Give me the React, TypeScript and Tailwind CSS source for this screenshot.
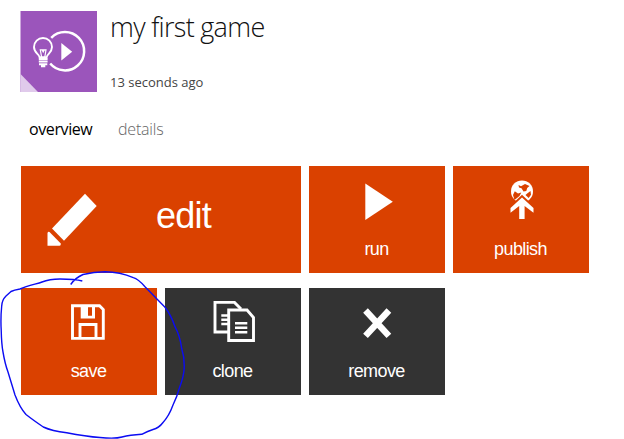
import type { ReactNode } from "react";

const SEGOE = "font-['Open_Sans','Noto_Sans',sans-serif]";

function Logo() {
  return (
    <svg className="block h-[81px] w-[77px] shrink-0" viewBox="20 11 77 81" fill="none">
      <rect x="20.5" y="11" width="76.5" height="81" fill="#9b55bb" />
      <path d="M20.5 74 L38 92 H20.5Z" fill="#e0caeb" />
      <path d="M51.2 37.8 A19.2 19.2 0 1 1 50.2 63.5" stroke="#fff" strokeWidth="2.5" />
      <path d="M61.3 43 L72.2 51.7 L61.3 60.5Z" fill="#fff" />
      <path d="M39.6 57.3 C39.2 54 34 53 34 47 A9 9 0 0 1 52 47 C52 53 47 54 46.6 57.3Z" stroke="#fff" strokeWidth="1.9" />
      <path d="M41.6 57 L40.3 49.8 H46 L44.8 57 M42.2 50 L43.2 52 L44.2 50" stroke="#fff" strokeWidth="1.2" />
      <path d="M38.8 59 H47.6 M38.8 61.6 H47.6 M39 64.2 H47.3 M41 66.3 H45.3" stroke="#fff" strokeWidth="2" />
    </svg>
  );
}

function PencilIcon() {
  return (
    <svg className="block h-[56px] w-[52px] shrink-0" viewBox="46 191 52 56" fill="#fff">
      <path d="M85 192.7 L96.7 205 L64 239.8 L52 227.4Z" />
      <path d="M49.5 231 L60.8 242.5 Q61 244.8 59.5 244.8 H47.5 V232 Q48 230.4 49.5 231Z" />
    </svg>
  );
}

function PlayIcon() {
  return (
    <svg className="block h-[54px] w-[136px]" viewBox="309 174 136 54" fill="#fff">
      <path d="M365.3 183.5 L392.8 201.7 L365.3 220Z" />
    </svg>
  );
}

function PublishIcon() {
  return (
    <svg className="block h-[54px] w-[136px]" viewBox="453 174 136 54">
      <circle cx="522" cy="191.4" r="11" fill="#fff" />
      <path d="M518.5 185 L521 186.2 L525 184 L529.5 186 L527.2 188 L526.3 191 L523.5 191.5 L521.5 188.3 L519 187.5Z" fill="#da4100" />
      <path d="M513 195 L514.8 191.3 L518 193.5 L521.3 192.5 L519.5 196 L514.5 200Z M527.2 193.5 L530.5 191 L531 194.8 L528.7 198 L525.5 195Z" fill="#da4100" />
      <path d="M522 194.8 L536 208 V217 H508 V208Z" fill="#da4100" />
      <path d="M522 197.6 L533.5 208 V212.7 L524.6 206 V219 H519.2 V206 L510.5 212.7 V208Z" fill="#fff" />
    </svg>
  );
}

function SaveIcon() {
  return (
    <svg className="block h-[54px] w-[136px]" viewBox="21 296 136 54" fill="none" stroke="#fff">
      <path d="M72.5 305.7 H99.5 L103.3 309.5 V338.4 H72.5Z" strokeWidth="2.9" />
      <path d="M80.7 305 H95 V318.5 H80.7Z M88 307 V315.7 H92 V307Z" fill="#fff" fillRule="evenodd" stroke="none" />
      <path d="M80 338 V324.5 H96 V338" strokeWidth="2.9" />
    </svg>
  );
}

function CloneIcon() {
  return (
    <svg className="block h-[54px] w-[136px]" viewBox="165 296 136 54" fill="none" stroke="#fff">
      <path d="M228 332 H215 V302.4 H234.5 L241 309" strokeWidth="2.9" />
      <path d="M221.3 315.5 H228 M221.3 319.7 H228 M221.3 324 H228" strokeWidth="2.4" />
      <path d="M228.7 310 H247 L253.5 317.5 V340.5 H228.7Z" strokeWidth="2.9" />
      <path d="M235 323.3 H247.3 M235 327.8 H247.3 M235 332.3 H247.3" strokeWidth="2.6" />
    </svg>
  );
}

function RemoveIcon() {
  return (
    <svg className="block h-[54px] w-[136px]" viewBox="309 296 136 54" stroke="#fff" strokeWidth="6.4">
      <path d="M365.5 310.5 L388.9 335.8 M388.9 310.5 L365.5 335.8" />
    </svg>
  );
}

function Tile({ label, dark, children }: { label: string; dark?: boolean; children: ReactNode }) {
  return (
    <button className={`flex h-[107px] w-[136px] flex-col items-center pt-2 text-white ${dark ? "bg-[#333333]" : "bg-[#da4100]"}`}>
      {children}
      <span className="mt-[10px] pr-px text-[18px] leading-[22px] tracking-[-0.6px]">{label}</span>
    </button>
  );
}

function Scribble() {
  return (
    <svg className="pointer-events-none absolute top-0 left-0 h-[439px] w-[200px]" viewBox="0 0 200 439" fill="none">
      <path
        d="M82.3 281 Q75 279 60 279 C50 279 47 280 42 282 S28 285 20 289 Q14 290 11 291.5 L6 296 Q2 300 1.7 306 Q.5 318 1.2 330 Q1.5 344 3 352 Q5 364 8 372 L15 395 Q20 408 26 414.5 Q33 420 43.3 427 Q52 431 66.7 432.7 Q86 436.5 100 437.5 Q115 439 122 437 Q130 435 141.7 434.3 Q148 431 153 429.5 Q159 428 163 422.5 Q169 416 173 405 Q177 397 179.3 388.3 Q184 376 184.2 368 Q184.5 357 181.7 348.5 Q180 336 175 326.7 Q171 315 165 307.3 L145 286.7 Q138 279 133.3 277.7 Q120 272 105 271.8 Q94 272 83 274.5 Q75 278 70.7 284.5"
        stroke="#0c0cf2"
        strokeWidth="1.4"
        strokeLinejoin="round"
      />
    </svg>
  );
}

export default function App() {
  return (
    <main className="relative h-[439px] w-[624px] overflow-hidden bg-white pt-[11px] pl-[20px] font-['Liberation_Sans',Arial,sans-serif]">
      <header className="flex h-[81px] gap-[13px]">
        <Logo />
        <div className={`flex flex-col whitespace-nowrap ${SEGOE}`}>
          <h1 className="text-[27px] leading-[32px] font-light tracking-[-0.7px] text-[#111]">my first game</h1>
          <p className="mt-[29px] text-[13px] leading-[20px] tracking-[0px] text-[#444]">13 seconds ago</p>
        </div>
      </header>
      <nav className={`flex h-[74px] gap-[25px] pt-[25px] pl-[9px] text-[16px] leading-[24px] whitespace-nowrap ${SEGOE}`}>
        <span className="w-[64px] tracking-[-0.4px] text-black">overview</span>
        <span className="font-light tracking-[-0.2px] text-[#666]">details</span>
      </nav>
      <section className="flex flex-col gap-[15px] pl-px">
        <div className="flex gap-2">
          <button className="flex h-[107px] w-[280px] items-center bg-[#da4100] pl-[25px] text-white">
            <PencilIcon />
            <span className="ml-[58px] pb-[7px] text-[36px] leading-[40px] tracking-[-0.8px]">edit</span>
          </button>
          <Tile label="run"><PlayIcon /></Tile>
          <Tile label="publish"><PublishIcon /></Tile>
        </div>
        <div className="flex gap-2">
          <Tile label="save"><SaveIcon /></Tile>
          <Tile label="clone" dark><CloneIcon /></Tile>
          <Tile label="remove" dark><RemoveIcon /></Tile>
        </div>
      </section>
      <Scribble />
    </main>
  );
}
